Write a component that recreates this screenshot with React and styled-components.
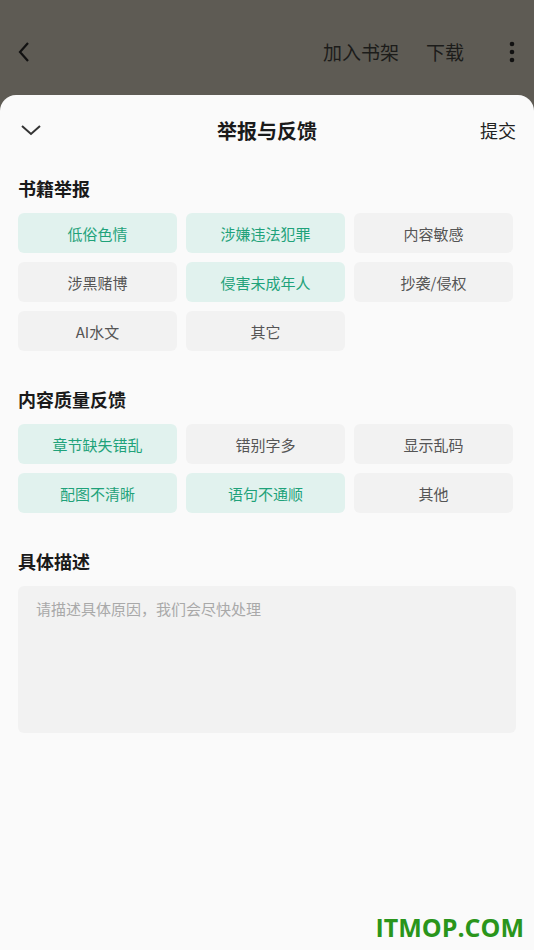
import React from "react";
import styled, { createGlobalStyle } from "styled-components";

const GlobalStyle = createGlobalStyle`
  html, body {
    margin: 0;
    padding: 0;
    background: #5e5b54;
  }
  * { box-sizing: border-box; }
  body {
    font-family: "Noto Sans CJK SC", "Noto Sans", sans-serif;
  }
`;

const Screen = styled.div`
  width: 534px;
  height: 950px;
  display: flex;
  flex-direction: column;
  background: #5e5b54;
  overflow: hidden;
  position: relative;
`;

const TopBar = styled.div`
  height: 95px;
  display: flex;
  align-items: center;
  padding: 8px 12px 0 14px;
`;

const IconBtn = styled.div`
  display: flex;
  align-items: center;
  justify-content: center;
  width: ${(p) => p.w || 24}px;
  height: 32px;
`;

const TopActions = styled.div`
  margin-left: auto;
  display: flex;
  align-items: center;
`;

const TopText = styled.span`
  font-size: 19px;
  color: #1c1c1a;
  line-height: 1;
  margin-right: ${(p) => p.gap || 0}px;
`;

const Sheet = styled.div`
  flex: 1;
  background: #fafafa;
  border-radius: 16px 16px 0 0;
  padding: 0 18px;
  display: flex;
  flex-direction: column;
`;

const SheetHeader = styled.div`
  height: 70px;
  display: flex;
  align-items: center;
  justify-content: space-between;
  position: relative;
`;

const Title = styled.div`
  position: absolute;
  left: 0;
  right: 0;
  text-align: center;
  font-size: 20px;
  font-weight: 700;
  color: #1a1a1a;
  pointer-events: none;
`;

const Submit = styled.span`
  font-size: 18px;
  color: #222;
`;

const SectionTitle = styled.div`
  font-size: 18px;
  font-weight: 700;
  color: #1a1a1a;
  height: 26px;
  line-height: 26px;
  margin-top: ${(p) => p.top || 0}px;
  margin-bottom: 12px;
`;

const ChipGrid = styled.div`
  display: grid;
  grid-template-columns: repeat(3, 159px);
  column-gap: 9px;
  row-gap: 9px;
`;

const Chip = styled.div`
  height: 40px;
  border-radius: 6px;
  display: flex;
  align-items: center;
  justify-content: center;
  font-size: 15px;
  background: ${(p) => (p.active ? "#e1f2ee" : "#f2f2f2")};
  color: ${(p) => (p.active ? "#1fa27a" : "#555555")};
`;

const TextBox = styled.div`
  width: 498px;
  height: 147px;
  background: #f2f2f2;
  border-radius: 6px;
  padding: 12px 18px;
  font-size: 15px;
  color: #a9a9a9;
`;

const Watermark = styled.div`
  position: absolute;
  right: 10px;
  bottom: 6px;
  font-family: "Open Sans", "Liberation Sans", sans-serif;
  font-weight: 700;
  font-size: 25px;
  color: #2a951b;
`;

const bookReports = [
  { label: "低俗色情", active: true },
  { label: "涉嫌违法犯罪", active: true },
  { label: "内容敏感" },
  { label: "涉黑赌博" },
  { label: "侵害未成年人", active: true },
  { label: "抄袭/侵权" },
  { label: "AI水文" },
  { label: "其它" },
];

const qualityReports = [
  { label: "章节缺失错乱", active: true },
  { label: "错别字多" },
  { label: "显示乱码" },
  { label: "配图不清晰", active: true },
  { label: "语句不通顺", active: true },
  { label: "其他" },
];

function App() {
  return (
    <Screen>
      <GlobalStyle />
      <TopBar>
        <IconBtn w={20}>
          <svg width="14" height="22" viewBox="0 0 14 22">
            <path d="M11 2 L3 11 L11 20" fill="none" stroke="#111" strokeWidth="2.2" />
          </svg>
        </IconBtn>
        <TopActions>
          <TopText gap={27}>加入书架</TopText>
          <TopText gap={38}>下载</TopText>
          <IconBtn w={20}>
            <svg width="6" height="24" viewBox="0 0 6 24">
              <circle cx="3" cy="4" r="2.3" fill="#111" />
              <circle cx="3" cy="12" r="2.3" fill="#111" />
              <circle cx="3" cy="20" r="2.3" fill="#111" />
            </svg>
          </IconBtn>
        </TopActions>
      </TopBar>
      <Sheet>
        <SheetHeader>
          <IconBtn w={26}>
            <svg width="22" height="12" viewBox="0 0 22 12">
              <path d="M2 2 L11 10 L20 2" fill="none" stroke="#333" strokeWidth="2" />
            </svg>
          </IconBtn>
          <Title>举报与反馈</Title>
          <Submit>提交</Submit>
        </SheetHeader>
        <SectionTitle top={10}>书籍举报</SectionTitle>
        <ChipGrid>
          {bookReports.map((c) => (
            <Chip key={c.label} active={c.active}>{c.label}</Chip>
          ))}
        </ChipGrid>
        <SectionTitle top={35}>内容质量反馈</SectionTitle>
        <ChipGrid>
          {qualityReports.map((c) => (
            <Chip key={c.label} active={c.active}>{c.label}</Chip>
          ))}
        </ChipGrid>
        <SectionTitle top={35}>具体描述</SectionTitle>
        <TextBox>请描述具体原因，我们会尽快处理</TextBox>
      </Sheet>
      <Watermark>ITMOP.COM</Watermark>
    </Screen>
  );
}

export default App;
